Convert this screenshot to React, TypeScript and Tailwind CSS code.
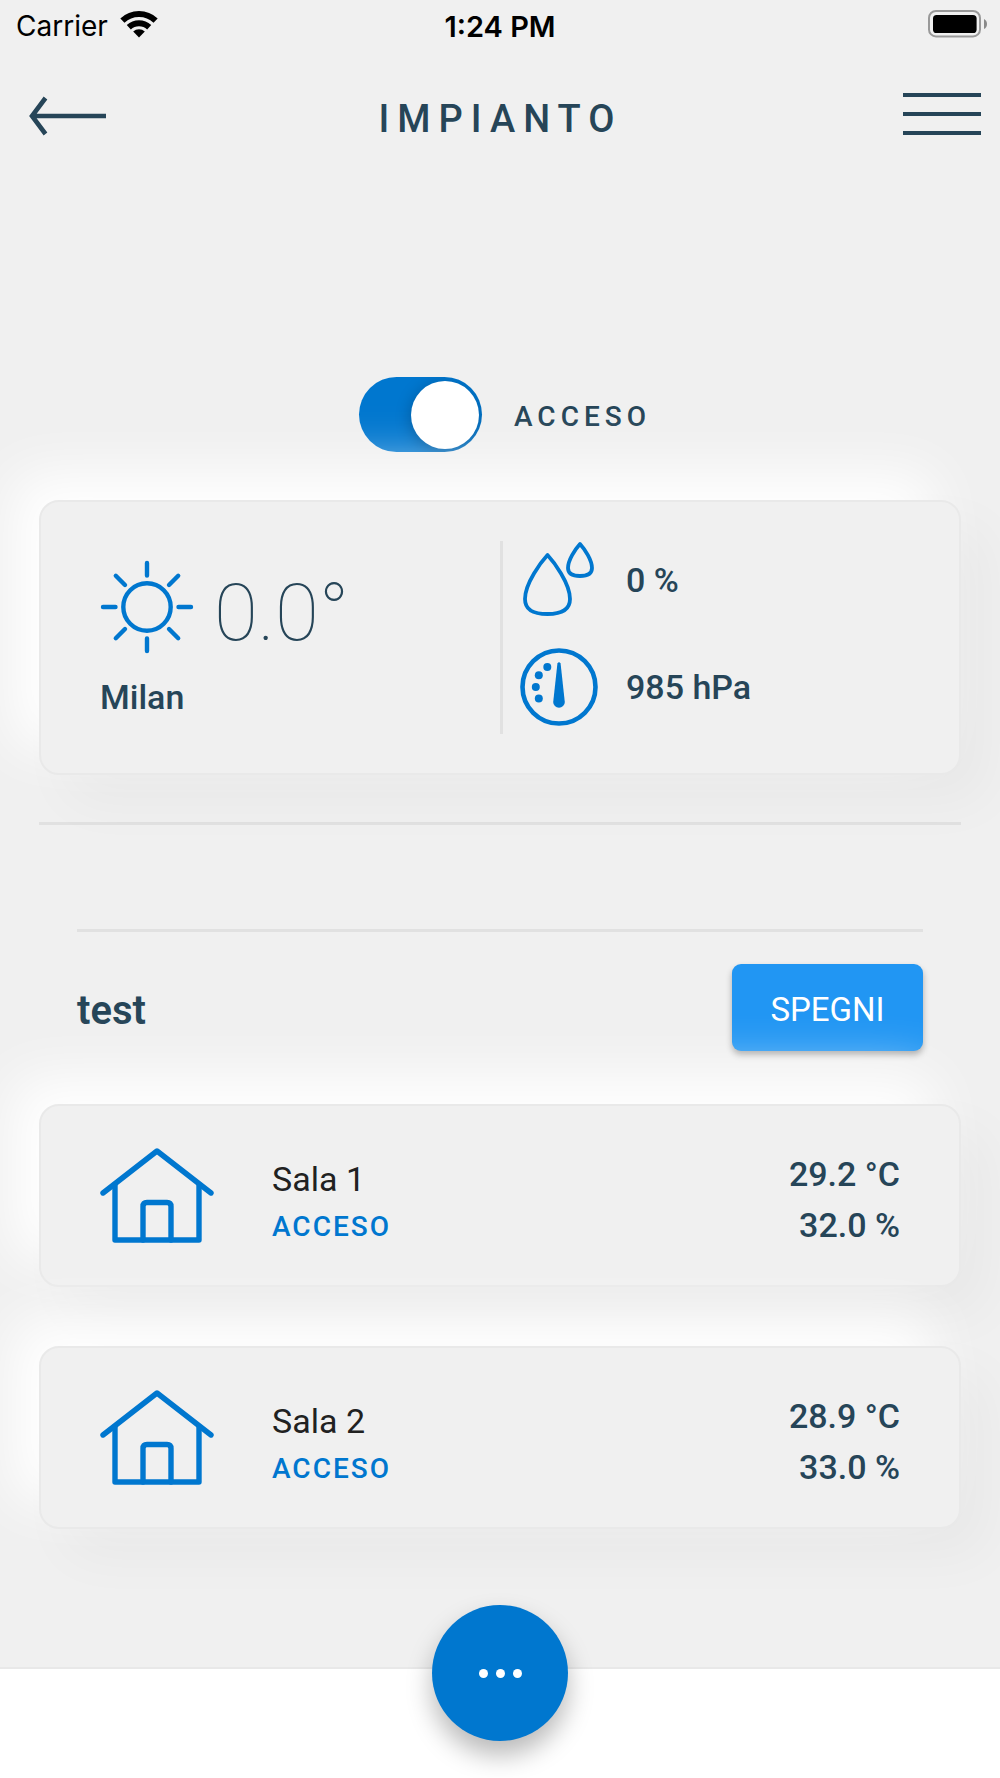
import { useState } from 'react';

interface Room {
  name: string;
  on: boolean;
  temperature: string;
  humidity: string;
}

const rooms: Room[] = [
  { name: 'Sala 1', on: true, temperature: '29.2 °C', humidity: '32.0 %' },
  { name: 'Sala 2', on: true, temperature: '28.9 °C', humidity: '33.0 %' },
];

const cardClass =
  'relative rounded-[20px] border-2 border-[#e9e9e9] bg-[#f0f0f0] shadow-[-27px_-27px_55px_#ffffff,27px_27px_55px_rgba(0,0,0,0.037)]';

function WifiIcon() {
  return (
    <svg width="38" height="28" viewBox="0 0 38 28" fill="none" stroke="#000" strokeWidth="6">
      <path d="M2.4 10.6A24 24 0 0 1 35.6 10.6" />
      <path d="M8.800 17.200A15 15 0 0 1 29.200 17.200" />
      <path d="M19 27.4 13.2 21.6A8.2 8.2 0 0 1 24.8 21.6Z" fill="#000" stroke="none" />
    </svg>
  );
}

function BatteryIcon() {
  return (
    <svg width="60" height="28" viewBox="0 0 60 28">
      <rect x="1" y="1" width="51" height="25.4" rx="7" fill="none" stroke="#999" strokeWidth="2" />
      <rect x="5" y="5" width="43.6" height="18" rx="3.6" fill="#000" />
      <path d="M56 9Q59 10.5 59 14Q59 17.5 56 19Z" fill="#8a8a8a" />
    </svg>
  );
}

function SunIcon() {
  return (
    <svg width="94" height="94" viewBox="0 0 94 94" fill="none" stroke="#0077cf" strokeWidth="4.4" strokeLinecap="round">
      <circle cx="47" cy="47" r="23.7" />
      <path d="M47 3v12.5M47 78.5v12.5M3 47h12.5M78.5 47h12.5M15.8 15.8l9.2 9.2M69 69l9.2 9.2M15.8 78.2l9.2-9.2M69 25l9.2-9.2" />
    </svg>
  );
}

function DropsIcon() {
  return (
    <svg width="78" height="78" viewBox="0 0 78 78" fill="none" stroke="#0077cf" strokeWidth="3.8" strokeLinejoin="round">
      <path d="M27.500 14C33.500 20.500 50 42 50 58C50 69.500 41 73 27.500 73S5 69.500 5 58C5 42 21.500 20.500 27.500 14Z" />
      <path d="M60 3C65 8.500 72 19 72 27C72 33 67 35 60 35S48 33 48 27C48 19 55 8.500 60 3Z" />
    </svg>
  );
}

function GaugeIcon() {
  return (
    <svg width="78" height="78" viewBox="0 0 78 78" fill="#0077cf">
      <circle cx="39" cy="39" r="36.5" fill="none" stroke="#0077cf" strokeWidth="4.6" />
      <path d="M37.4 15.5Q39 13 40.6 15.5L44.8 54A5.8 5.8 0 1 1 33.2 54Z" />
      <circle cx="27.3" cy="19" r="4" />
      <circle cx="18.8" cy="27.3" r="4" />
      <circle cx="15.8" cy="39" r="4" />
      <circle cx="18.8" cy="50.6" r="4" />
    </svg>
  );
}

function HouseIcon() {
  return (
    <svg width="114" height="96" viewBox="0 0 114 96" fill="none" stroke="#0077cf" strokeWidth="5.4" strokeLinecap="round" strokeLinejoin="round">
      <path d="M3 45 57 3 111 45" />
      <path d="M15 36.5V92H99V36.5" />
      <path d="M43 92V58.500Q43 54.500 47 54.500H67Q71 54.500 71 58.500V92" />
    </svg>
  );
}

function RoomCard({ room }: { room: Room }) {
  return (
    <li className={`${cardClass} flex h-[183px] items-center pr-[59px] pl-[59px]`}>
      <HouseIcon />
      <div className="ml-[58px] flex-1 pt-4">
        <h3 className="text-[34px] leading-[46px] text-[#212121]">{room.name}</h3>
        <p className="text-[28px] leading-[50px] font-medium tracking-[2px] text-[#0077cf]">
          {room.on ? 'ACCESO' : 'SPENTO'}
        </p>
      </div>
      <div className="pt-2 text-right text-[34px] leading-[51px] font-medium text-[#264558]">
        <p>{room.temperature}</p>
        <p>{room.humidity}</p>
      </div>
    </li>
  );
}

export default function App() {
  const [active, setActive] = useState(true);

  return (
    <div className="flex min-h-screen flex-col bg-white font-['Roboto',sans-serif] text-[#264558]">
      <main className="border-b-2 border-[#e8e8e8] bg-[#f0f0f0] pb-[138px]">
        {/* Status bar */}
        <div className="grid h-12 grid-cols-3 items-center px-3 font-['Inter',sans-serif] text-[28px] leading-none text-black">
          <div className="flex items-center gap-3 pl-1">
            <span className="pt-1">Carrier</span>
            <WifiIcon />
          </div>
          <span className="pt-1 text-center text-[29px] font-semibold">1:24 PM</span>
          <div className="flex justify-end">
            <BatteryIcon />
          </div>
        </div>

        {/* Header */}
        <header className="grid h-[136px] grid-cols-3 items-center pr-[19px] pl-5">
          <button type="button" aria-label="Indietro" className="w-fit pl-2">
            <svg width="80" height="40" viewBox="0 0 80 40" fill="none" stroke="#264558" strokeWidth="4.6">
              <path d="M78 20H4M17.5 2 4 20 17.5 38" />
            </svg>
          </button>
          <h1 className="pt-1.5 text-center text-[38px] font-medium tracking-[8px]">IMPIANTO</h1>
          <button type="button" aria-label="Menu" className="w-fit justify-self-end pb-1">
            <svg width="78" height="44" viewBox="0 0 78 44" stroke="#264558" strokeWidth="4">
              <path d="M0 3h78M0 22h78M0 41h78" />
            </svg>
          </button>
        </header>

        <label className="mt-[193px] flex items-center justify-center gap-8 pl-2.5">
          <input
            type="checkbox"
            role="switch"
            checked={active}
            onChange={(e) => setActive(e.target.checked)}
            className="flex h-[75px] w-[123px] appearance-none items-center overflow-hidden rounded-full bg-gray-400 p-[3px] before:size-[68px] before:rounded-full before:bg-white before:shadow-[0_3px_16px_rgba(0,0,0,0.25)] checked:justify-end checked:bg-[#0077cf]"
          />
          <span className="pt-1 text-[28px] font-medium tracking-[5px]">{active ? 'ACCESO' : 'SPENTO'}</span>
        </label>

        {/* Weather */}
        <section className={`${cardClass} mx-[39px] mt-12 grid h-[275px] grid-cols-2 py-[39px]`}>
          <div className="flex flex-col pt-[19px] pl-[59px]">
            <div className="flex h-[94px] items-center gap-5">
              <SunIcon />
              <span className="pt-3 text-[80px] leading-[86px] font-thin">0.0°</span>
            </div>
            <p className="mt-5 text-[34px] leading-[46px] font-medium">Milan</p>
          </div>
          <div className="flex flex-col justify-between border-l-[3px] border-[#e1e1e1] pb-2 pl-[17px] text-[34px] font-medium">
            <p className="flex items-center gap-7">
              <DropsIcon />
              0 %
            </p>
            <p className="flex items-center gap-7">
              <GaugeIcon />
              985 hPa
            </p>
          </div>
        </section>

        <hr className="mx-[39px] mt-[47px] border-t-[3px] border-[#e1e1e1]" />

        {/* Zone */}
        <section className="mt-[104px]">
          <div className="mx-[77px] flex items-center justify-between border-t-[3px] border-[#e1e1e1] pt-8">
            <h2 className="pt-1.5 text-[40px] font-semibold">test</h2>
            <button
              type="button"
              className="h-[87px] w-[191px] rounded-[9px] bg-[#2196f3] pt-1 text-[33px] text-white shadow-[0_4px_6px_rgba(0,0,0,0.3)]"
            >
              SPEGNI
            </button>
          </div>
          <ul className="mx-[39px] mt-[53px] flex flex-col gap-[59px]">
            {rooms.map((room) => (
              <RoomCard key={room.name} room={room} />
            ))}
          </ul>
        </section>
      </main>

      <footer className="relative h-[109px]">
        <button
          type="button"
          aria-label="Altro"
          className="absolute -top-16 left-1/2 flex size-[136px] -translate-x-1/2 items-center justify-center gap-2 rounded-full bg-[#0077cf] shadow-[0_14px_26px_rgba(0,0,0,0.28)]"
        >
          <span className="size-[9px] rounded-full bg-white" />
          <span className="size-[9px] rounded-full bg-white" />
          <span className="size-[9px] rounded-full bg-white" />
        </button>
      </footer>
    </div>
  );
}
